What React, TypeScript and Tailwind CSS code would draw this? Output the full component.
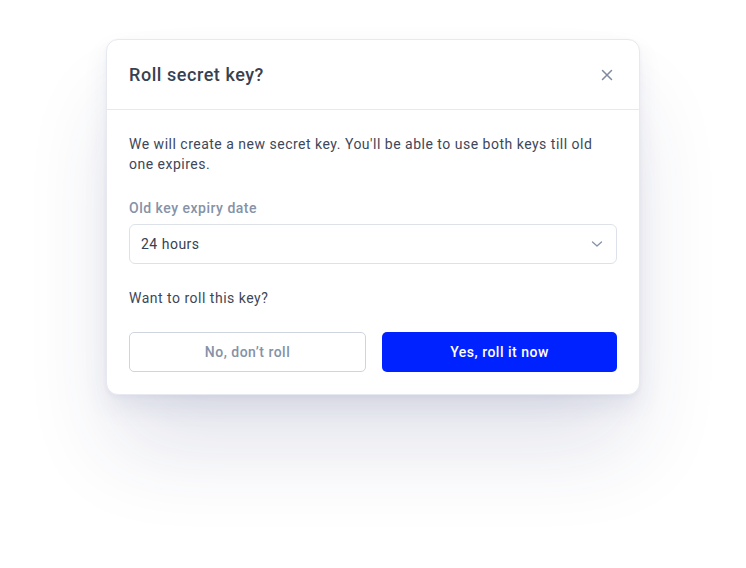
import React from "react";

export default function App() {
  return (
    <div className="min-h-[568px] w-[746px] bg-white pt-[39px] pl-[106px] tracking-[0.5px]" style={{ fontFamily: "Roboto, 'Liberation Sans', sans-serif" }}>
      <div className="w-[534px] rounded-[12px] border border-[#e6e9ef] bg-white shadow-[0_2px_4px_rgba(40,50,90,0.04),0_12px_24px_rgba(40,50,110,0.08),0_60px_90px_-10px_rgba(40,50,110,0.14)]">
        <div className="flex h-[70px] items-center justify-between border-b border-[#e6e9ef] pl-[22px] pr-[26px]">
          <h2 className="text-[18px] font-medium leading-6 tracking-[0.55px] text-[#364152]">Roll secret key?</h2>
          <svg width="12" height="12" viewBox="0 0 12 12" fill="none" stroke="#7d8aa0" strokeWidth="1.5" strokeLinecap="round">
            <path d="M1.5 1.5l9 9M10.5 1.5l-9 9" />
          </svg>
        </div>
        <div className="px-[22px] pt-[24px] pb-[22px]">
          <p className="text-[14px] leading-5 text-[#3d4759]">
            We will create a new secret key. You'll be able to use both keys till old one expires.
          </p>
          <div className="mt-[24px] text-[14px] font-medium leading-5 text-[#8592a8]">Old key expiry date</div>
          <div className="mt-[6px] flex h-[40px] items-center justify-between rounded-[6px] border border-[#dde2ea] pl-[11px] pr-[13px]">
            <span className="text-[14px] text-[#364152]">24 hours</span>
            <svg width="12" height="8" viewBox="0 0 12 8" fill="none" stroke="#8592a8" strokeWidth="1.3" strokeLinecap="round" strokeLinejoin="round">
              <path d="M1.5 2l4.5 4 4.5-4" />
            </svg>
          </div>
          <p className="mt-[24px] text-[14px] leading-5 text-[#3d4759]">Want to roll this key?</p>
          <div className="mt-[24px] flex gap-[16px]">
            <button className="flex h-[40px] flex-1 items-center justify-center rounded-[5px] border border-[#cfd5de] bg-white text-[14px] font-medium tracking-[0.5px] text-[#8592a8]">
              No, don’t roll
            </button>
            <button className="flex h-[40px] flex-1 items-center justify-center rounded-[5px] bg-[#0022ff] text-[14px] font-medium tracking-[0.5px] text-white">
              Yes, roll it now
            </button>
          </div>
        </div>
      </div>
    </div>
  );
}
